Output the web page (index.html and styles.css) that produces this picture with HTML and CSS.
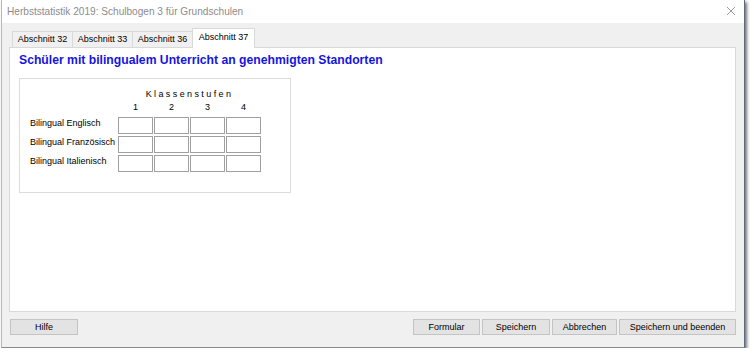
FILE: index.html
```html
<!DOCTYPE html>
<html lang="de">
<head>
    <meta charset="UTF-8">
    <title>Herbststatistik 2019: Schulbogen 3 für Grundschulen</title>
    <link rel="stylesheet" href="styles.css">
</head>
<body>
    <div class="window">
        <!-- Titelleiste -->
        <div class="titlebar">
            <span class="title">Herbststatistik 2019: Schulbogen 3 für Grundschulen</span>
            <svg class="close" width="10" height="10" viewBox="0 0 10 10">
                <path d="M1 1 L9 9 M9 1 L1 9" stroke="#9a9a9a" stroke-width="1" fill="none"/>
            </svg>
        </div>

        <div class="client">
            <!-- Registerkarten -->
            <div class="tabs">
                <div class="tab">Abschnitt 32</div>
                <div class="tab">Abschnitt 33</div>
                <div class="tab">Abschnitt 36</div>
                <div class="tab active">Abschnitt 37</div>
            </div>

            <div class="panel">
                <h1>Schüler mit bilingualem Unterricht an genehmigten Standorten</h1>

                <div class="group">
                    <div class="grid">
                        <div class="caption">Klassenstufen</div>
                        <div class="num first">1</div>
                        <div class="num">2</div>
                        <div class="num">3</div>
                        <div class="num">4</div>

                        <div class="label">Bilingual Englisch</div>
                        <input class="cell" type="text">
                        <input class="cell" type="text">
                        <input class="cell" type="text">
                        <input class="cell" type="text">

                        <div class="label">Bilingual Französisch</div>
                        <input class="cell" type="text">
                        <input class="cell" type="text">
                        <input class="cell" type="text">
                        <input class="cell" type="text">

                        <div class="label">Bilingual Italienisch</div>
                        <input class="cell" type="text">
                        <input class="cell" type="text">
                        <input class="cell" type="text">
                        <input class="cell" type="text">
                    </div>
                </div>
            </div>

            <!-- Schaltflächen -->
            <div class="footer">
                <button class="btn w-hilfe">Hilfe</button>
                <div class="actions">
                    <button class="btn w-formular">Formular</button>
                    <button class="btn w-speichern">Speichern</button>
                    <button class="btn w-abbrechen">Abbrechen</button>
                    <button class="btn w-beenden">Speichern und beenden</button>
                </div>
            </div>
        </div>
    </div>
</body>
</html>
```

FILE: styles.css
```css
body {
    margin: 0;
    background-color: #ffffff;
    font-family: "Liberation Sans", Arial, sans-serif;
}
.window {
    margin-left: 1px;
    width: 744px;
    height: 348px;
    box-sizing: border-box;
    border-left: 1px solid #b8b8b8;
    border-right: 1px solid #5d6a7c;
    border-bottom: 1px solid #8a8a8a;
    background-color: #f0f0f0;
    box-shadow: 2px 2px 3px rgba(0,0,0,0.55);
    display: flex;
    flex-direction: column;
}
.titlebar {
    height: 23px;
    background-color: #ffffff;
    display: flex;
    align-items: center;
    justify-content: space-between;
    padding: 0 8px 0 5px;
}
.title {
    font-family: "Liberation Sans", Arial, sans-serif;
    font-size: 10.1px;
    color: #8c8c8c;
}
.close {
    margin-top: -2px;
}
.client {
    flex: 1;
    padding: 5px 8px 0 7px;
}
.tabs {
    display: flex;
    align-items: flex-end;
    height: 19px;
    padding-left: 3px;
}
.tab {
    width: 61px;
    height: 16px;
    box-sizing: border-box;
    margin-right: -1px;
    border: 1px solid #d9d9d9;
    border-bottom: none;
    background-color: #f0f0f0;
    font-size: 9px;
    line-height: 15px;
    text-align: center;
    color: #000000;
}
.tab.active {
    position: relative;
    z-index: 1;
    width: 63px;
    height: 20px;
    margin-bottom: -1px;
    background-color: #ffffff;
    line-height: 16px;
}
.panel {
    height: 265px;
    box-sizing: border-box;
    border: 1px solid #d9d9d9;
    background-color: #ffffff;
    padding: 5px 9px;
}
h1 {
    margin: 0 0 11px 0;
    font-size: 12.2px;
    line-height: 14px;
    font-weight: bold;
    color: #1515e0;
}
.group {
    width: 272px;
    height: 115px;
    box-sizing: border-box;
    border: 1px solid #dcdcdc;
    padding: 9px 0 0 10px;
}
.grid {
    display: grid;
    grid-template-columns: 87px repeat(4, 35px);
    grid-template-rows: 11px 14px 17px 17px 17px;
    column-gap: 1px;
    row-gap: 2px;
    font-size: 9px;
    color: #000000;
}
.caption {
    grid-column: 2 / 6;
    text-align: center;
    letter-spacing: 2.4px;
    line-height: 12px;
}
.num {
    text-align: center;
    line-height: 12px;
}
.num.first {
    grid-column: 2;
}
.label {
    grid-column: 1;
    line-height: 13px;
    white-space: nowrap;
}
.cell {
    width: 35px;
    height: 17px;
    box-sizing: border-box;
    margin: 0;
    padding: 0;
    border: 1px solid #a0a0a0;
    background-color: #ffffff;
}
.footer {
    display: flex;
    justify-content: space-between;
    margin-top: 7px;
    padding-left: 1px;
}
.actions {
    display: flex;
    gap: 2px;
}
.btn {
    height: 16px;
    box-sizing: border-box;
    margin: 0;
    padding: 0;
    border: 1px solid #c4c4c4;
    background-color: #e3e3e3;
    font-family: "Liberation Sans", Arial, sans-serif;
    font-size: 9px;
    color: #000000;
}
.w-hilfe { width: 68px; }
.w-formular { width: 67px; }
.w-speichern { width: 68px; }
.w-abbrechen { width: 65px; }
.w-beenden { width: 117px; }
```
